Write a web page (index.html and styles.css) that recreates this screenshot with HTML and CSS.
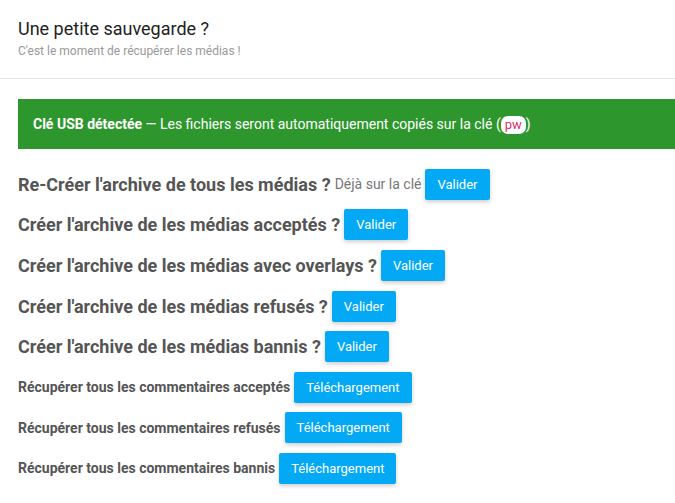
FILE: index.html
```html
<!DOCTYPE html>
<html lang="fr">
<head>
  <meta charset="UTF-8" />
  <meta name="viewport" content="width=device-width, initial-scale=1.0"/>
  <title>Sauvegarde</title>
  <link rel="stylesheet" href="styles.css">
</head>
<body>

  <div class="entete">
    <h1>Une petite sauvegarde ?</h1>
    <p class="sous-titre">C'est le moment de récupérer les médias !</p>
  </div>

  <div class="contenu">
    <div class="alerte">
      <strong>Clé USB détectée</strong> — Les fichiers seront automatiquement copiés sur la clé (<code>pw</code>)
    </div>

    <div class="ligne">
      <h3>Re-Créer l'archive de tous les médias ?</h3>
      <span class="info">Déjà sur la clé</span>
      <button>Valider</button>
    </div>
    <div class="ligne">
      <h3>Créer l'archive de les médias acceptés ?</h3>
      <button>Valider</button>
    </div>
    <div class="ligne">
      <h3>Créer l'archive de les médias avec overlays ?</h3>
      <button>Valider</button>
    </div>
    <div class="ligne">
      <h3>Créer l'archive de les médias refusés ?</h3>
      <button>Valider</button>
    </div>
    <div class="ligne">
      <h3>Créer l'archive de les médias bannis ?</h3>
      <button>Valider</button>
    </div>
    <div class="ligne">
      <h4>Récupérer tous les commentaires acceptés</h4>
      <button>Téléchargement</button>
    </div>
    <div class="ligne">
      <h4>Récupérer tous les commentaires refusés</h4>
      <button>Téléchargement</button>
    </div>
    <div class="ligne">
      <h4>Récupérer tous les commentaires bannis</h4>
      <button>Téléchargement</button>
    </div>
  </div>

</body>
</html>
```

FILE: styles.css
```css
body {
  margin: 0;
  font-family: Roboto, "Liberation Sans", sans-serif;
  background: #fff;
  color: #555;
}
.entete {
  padding: 18px 18px 0;
  height: 60px;
  border-bottom: 1px solid #e8e8e8;
}
h1 {
  margin: 0;
  font-size: 18px;
  font-weight: 400;
  color: #222;
  line-height: 22px;
}
.sous-titre {
  margin: 4px 0 0;
  font-size: 12px;
  color: #999;
}
.contenu {
  padding: 20px 0 0 18px;
}
.alerte {
  background: #2d972d;
  color: #fff;
  font-size: 14px;
  line-height: 50px;
  height: 50px;
  padding: 0 15px;
  white-space: nowrap;
  margin-bottom: 15px;
}
.alerte strong {
  font-weight: 700;
}
.alerte code {
  font-family: Roboto, "Liberation Sans", sans-serif;
  font-size: 13px;
  color: #d6336c;
  background: #fff;
  border-radius: 7px;
  padding: 1px 4px 2px;
}
.ligne {
  display: flex;
  align-items: center;
  gap: 4px;
  height: 40.6px;
}
h3 {
  margin: 0;
  font-size: 18px;
  font-weight: 700;
  color: #555;
}
h4 {
  margin: 0;
  font-size: 14px;
  font-weight: 700;
  color: #555;
}
.info {
  font-size: 14px;
  color: #777;
}
button {
  font-family: Roboto, "Liberation Sans", sans-serif;
  font-size: 13px;
  background: #03a9f4;
  color: #fff;
  border: none;
  border-radius: 2px;
  height: 31px;
  padding: 0 12px;
  box-shadow: 0 2px 4px rgba(0, 0, 0, 0.2);
  cursor: pointer;
}
```
